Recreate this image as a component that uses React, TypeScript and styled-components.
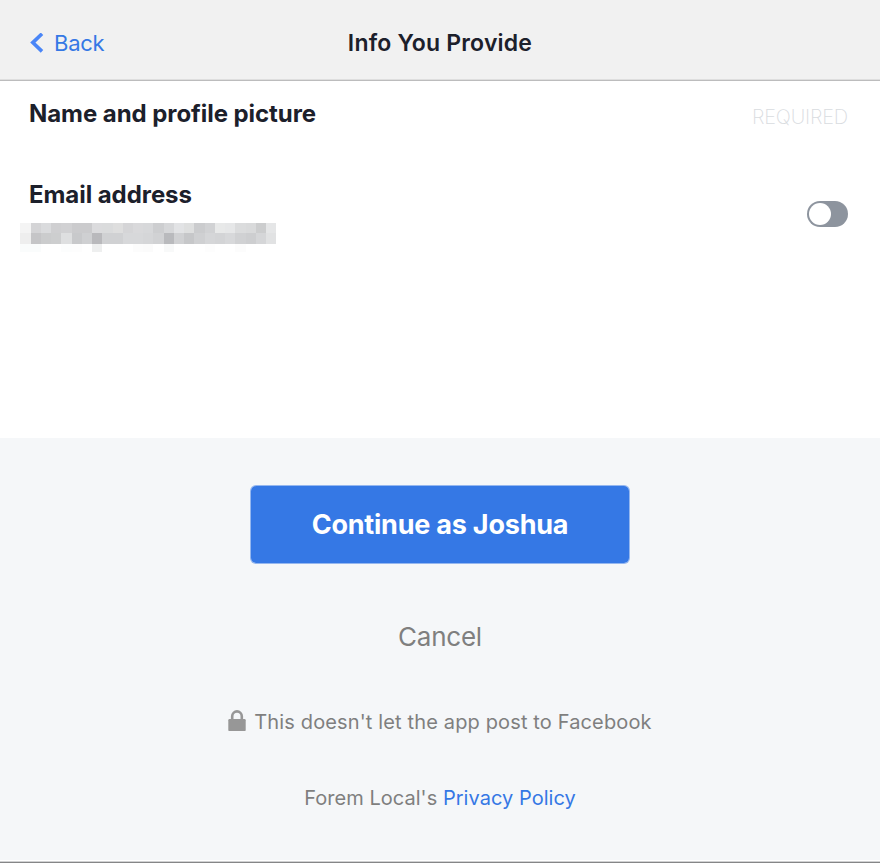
import React from 'react';
import styled, { createGlobalStyle } from 'styled-components';

const GlobalStyle = createGlobalStyle`
  * { box-sizing: border-box; }
  body { margin: 0; background: #f5f7f9; font-family: Inter, "Liberation Sans", sans-serif; }
`;

const Page = styled.div`
  height: 863px;
  display: flex;
  flex-direction: column;
  overflow: hidden;
  background: #f5f7f9;
`;

const Header = styled.header`
  height: 81px;
  flex: none;
  display: grid;
  grid-template-columns: 1fr auto 1fr;
  align-items: center;
  padding: 5px 30px 0;
  background: #f1f1f1;
  border-bottom: 1px solid #bcbcbd;
  box-shadow: inset 0 -1px #dedede;
`;

const BackLink = styled.a`
  display: flex;
  align-items: center;
  gap: 10px;
  color: #3578e5;
  font-size: 22px;
  line-height: 28px;
  letter-spacing: -0.25px;
`;

const Title = styled.h1`
  margin: 0;
  color: #1c202b;
  font-size: 23px;
  line-height: 28px;
  font-weight: 600;
  letter-spacing: 0.2px;
`;

const Permissions = styled.main`
  height: 357px;
  flex: none;
  padding: 17px 32px 0 29px;
  background: #fff;
`;

const Row = styled.section<{ $height: number }>`
  display: flex;
  justify-content: space-between;
  height: ${(p) => p.$height}px;
`;

const Label = styled.h2`
  margin: 0;
  color: #1c202b;
  font-size: 24px;
  line-height: 32px;
  font-weight: 700;
  letter-spacing: -0.06px;
`;

const Required = styled.span`
  padding-top: 5px;
  color: #d9dcdf;
  font-size: 20px;
  line-height: 28px;
  font-weight: 200;
  letter-spacing: -0.2px;
`;

const Redacted = styled.div`
  display: grid;
  grid-template-columns: repeat(25, 10.24px);
  grid-template-rows: 10px 10.5px 8px;
  margin: 12px 0 0 -8.6px;
`;

const Cell = styled.span<{ $tone: string }>`
  background: #${(p) => p.$tone};
`;

const Toggle = styled.button`
  width: 41px;
  height: 26px;
  margin: 22px 0 0;
  padding: 2px;
  border: 0;
  border-radius: 13px;
  background: #8d949e;
`;

const Knob = styled.span`
  display: block;
  width: 22px;
  height: 22px;
  border-radius: 50%;
  background: #fff;
`;

const Footer = styled.footer`
  flex: 1;
  display: flex;
  flex-direction: column;
  align-items: center;
  padding-top: 47px;
  border-bottom: 1px solid #858687;
  box-shadow: inset 0 -1px #d0d1d2, inset 0 -2px #fff;
`;

const Continue = styled.button`
  width: 380px;
  height: 79px;
  padding: 0;
  border: 1px solid rgba(53, 120, 229, 0.5);
  border-radius: 6px;
  background: #3578e5;
  background-clip: padding-box;
  color: #fff;
  font: 700 27px/77px Inter, sans-serif;
  letter-spacing: -0.22px;
`;

const Cancel = styled.button`
  margin: 54px 0 0;
  padding: 0;
  border: 0;
  background: none;
  color: #7f7f7f;
  font: 400 26px/38px Inter, sans-serif;
  letter-spacing: -0.25px;
`;

const Note = styled.p<{ $top: number; $spacing: number }>`
  display: flex;
  align-items: center;
  white-space: pre;
  margin: ${(p) => p.$top}px 0 0;
  color: #7f7f7f;
  font-size: 20px;
  line-height: 28px;
  letter-spacing: ${(p) => p.$spacing}px;
`;

const LockIcon = styled.svg`
  margin: -2px 8px 0 0;
`;

const PolicyLink = styled.a`
  color: #3578e5;
`;

const mosaic = [
  'f4f4f4 d4d4d6 dadbdd cfcfd1 d1d1d3 cbcbcd cbcbcd dbdbdd dadbdc dedede d5d5d7 d9d9db d7d8da cdced0 d6d7d9 e2e3e5 dedfdf cbccce d1d2d4 e8e9e9 e6e7e8 dbdcdd d9dadb cccdce e5e6e7',
  'eeeeee c5c5c7 cbcccd cdcecf dedfe0 c8c9cb cfd0d2 b9b9bc d0d1d3 d0d1d3 d7d8da d7d8da d5d6d8 d1d2d4 b9babd d0d1d3 c6c7c9 cfd0d2 d5d6d8 d3d4d6 d7d8da d0d1d3 cdced0 d5d6d8 e1e2e3',
  'fafcfc fafcfc ffffff ffffff fcfdfd fdfdfd ffffff eeefef ffffff ffffff ffffff fcfcfc fbfbfb ffffff f8f9f9 ffffff ffffff ffffff fdfdfd ffffff ffffff fcfcfc ffffff ffffff ffffff',
].flatMap((line) => line.split(' '));

export default function App() {
  return (
    <Page>
      <GlobalStyle />
      <Header>
        <BackLink>
          <svg width="14" height="20" viewBox="0 0 14 20">
            <path d="M12 0.8 L2.8 9.6 L12 18.4" fill="none" stroke="#4a86f7" strokeWidth="3.6" />
          </svg>
          Back
        </BackLink>
        <Title>Info You Provide</Title>
      </Header>
      <Permissions>
        <Row $height={81}>
          <Label>Name and profile picture</Label>
          <Required>REQUIRED</Required>
        </Row>
        <Row $height={90}>
          <div>
            <Label>Email address</Label>
            <Redacted>
              {mosaic.map((tone, i) => (
                <Cell key={i} $tone={tone} />
              ))}
            </Redacted>
          </div>
          <Toggle role="switch" aria-checked={false} aria-label="Email address">
            <Knob />
          </Toggle>
        </Row>
      </Permissions>
      <Footer>
        <Continue>Continue as Joshua</Continue>
        <Cancel>Cancel</Cancel>
        <Note $top={52} $spacing={0.14}>
          <LockIcon width="18" height="22" viewBox="0 0 18 22">
            <path d="M4.2 10V6.2a4.8 4.8 0 0 1 9.6 0V10" fill="none" stroke="#979797" strokeWidth="2.6" />
            <rect x="0.3" y="9" width="17.4" height="12.1" rx="1.2" fill="#979797" />
          </LockIcon>
          This doesn't let the app post to Facebook
        </Note>
        <Note $top={48} $spacing={0.04}>
          Forem Local's <PolicyLink>Privacy Policy</PolicyLink>
        </Note>
      </Footer>
    </Page>
  );
}
